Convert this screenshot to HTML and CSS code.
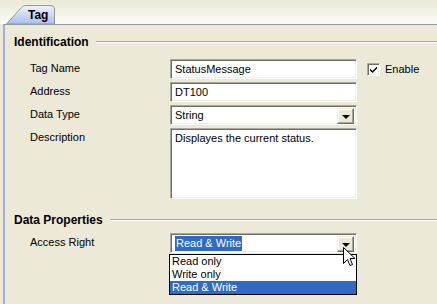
FILE: index.html
```html
<!DOCTYPE html>
<html lang="en">
<head>
  <meta charset="UTF-8" />
  <title>Tag Properties</title>
  <link rel="stylesheet" href="styles.css">
</head>
<body>

<div class="tabs">
  <div class="tab">
    <svg class="tab-shape" width="50" height="21" viewBox="0 0 50 21">
      <defs>
        <linearGradient id="tabfill" x1="0" y1="0" x2="0" y2="1">
          <stop offset="0" stop-color="#eef2fc"/>
          <stop offset="1" stop-color="#a9bfee"/>
        </linearGradient>
      </defs>
      <path d="M0.5 21 L15.5 4.5 Q17 2.5 19.5 2.5 L45 2.5 Q48.5 2.5 48.5 6 L48.5 21 Z" fill="url(#tabfill)" stroke="#919b9c" stroke-width="1"/>
    </svg>
    <span class="tab-label">Tag</span>
  </div>
</div>

<div class="pane">
  <div class="group-title">Identification</div>

  <div class="form">
    <label class="label">Tag Name</label>
    <div class="field"><div class="input">StatusMessage</div></div>
    <div class="extra">
      <span class="checkbox">
        <svg width="9" height="9" viewBox="0 0 9 9"><path d="M1 3.5 L3.5 6 L8 1.5 L8 3.5 L3.5 8 L1 5.5 Z" fill="#000"/></svg>
      </span>
      Enable
    </div>

    <label class="label">Address</label>
    <div class="field"><div class="input">DT100</div></div>
    <div class="extra"></div>

    <label class="label">Data Type</label>
    <div class="field">
      <div class="input combo">
        <span class="combo-text">String</span>
        <span class="combo-btn"><span class="arrow"></span></span>
      </div>
    </div>
    <div class="extra"></div>

    <label class="label">Description</label>
    <div class="field"><div class="input textarea">Displayes the current status.</div></div>
    <div class="extra"></div>
  </div>

  <div class="group-title second">Data Properties</div>

  <div class="form compact">
    <label class="label">Access Right</label>
    <div class="field dropdown-host">
      <div class="input combo">
        <span class="combo-text"><span class="selected">Read &amp; Write</span></span>
        <span class="combo-btn"><span class="arrow"></span></span>
      </div>
      <ul class="dropdown">
        <li>Read only</li>
        <li>Write only</li>
        <li class="active">Read &amp; Write</li>
      </ul>
      <svg class="cursor" width="13" height="21" viewBox="0 0 13 21">
        <path d="M0.5 0.5 L0.5 16.5 L4.5 12.5 L7 18.5 L9.5 17.5 L7 11.5 L12 11.5 Z" fill="#fff" stroke="#000" stroke-width="1"/>
      </svg>
    </div>
    <div class="extra"></div>
  </div>
</div>

</body>
</html>
```

FILE: styles.css
```css
:root {
  --face: #ece9d8;
  --edge: #919b9c;
  --line: #aca899;
  --select: #316ac5;
}

* {
  box-sizing: border-box;
}

body {
  margin: 0;
  height: 304px;
  background: var(--face);
  font-family: 'Liberation Sans', Arial, sans-serif;
  font-size: 11px;
  color: #000;
  overflow: hidden;
}

.tabs {
  height: 24px;
  padding-left: 6px;
  display: flex;
  align-items: flex-end;
  background: linear-gradient(#ece9d8, #fbfbf8);
}

.tab {
  position: relative;
  width: 50px;
  height: 21px;
}

.tab-shape {
  position: absolute;
  left: 0;
  top: 0;
}

.tab-label {
  position: relative;
  display: block;
  padding: 5px 0 0 22px;
  font-weight: bold;
  font-size: 12px;
}

.pane {
  margin-left: 3px;
  border-top: 1px solid var(--edge);
  border-left: 2px solid #9db2d6;
  padding: 10px 0 0 9px;
  height: 280px;
}

.group-title {
  display: flex;
  align-items: center;
  font-weight: bold;
  font-size: 12px;
  height: 14px;
}

.group-title::after {
  content: "";
  flex: 1;
  height: 1px;
  margin-left: 7px;
  background: var(--line);
  border-bottom: 1px solid #fff;
  box-sizing: content-box;
}

.group-title.second {
  margin-top: 14px;
}

.form {
  display: grid;
  grid-template-columns: 140px 187px 1fr;
  row-gap: 3px;
  padding-left: 16px;
  margin-top: 10px;
}

.form.compact {
  margin-top: 6px;
}

.label {
  padding-top: 3px;
}

.field {
  width: 187px;
}

.input {
  height: 20px;
  background: #fff;
  border: 1px solid;
  border-color: #aca899 #fff #fff #aca899;
  box-shadow: inset 1px 1px 0 #716f64, inset -1px -1px 0 #f1efe2;
  padding: 3px 4px 0;
  white-space: nowrap;
}

.textarea {
  height: 71px;
}

.combo {
  display: flex;
  align-items: flex-start;
  padding: 2px 2px 0 2px;
}

.combo-text {
  flex: 1;
  padding: 1px 0 0 2px;
}

.combo-btn {
  width: 17px;
  height: 16px;
  background: var(--face);
  border: 1px solid;
  border-color: #f1efe2 #716f64 #716f64 #f1efe2;
  box-shadow: inset -1px -1px 0 #aca899, inset 1px 1px 0 #fff;
  display: flex;
  align-items: center;
  justify-content: center;
}

.arrow {
  width: 0;
  height: 0;
  border-left: 4px solid transparent;
  border-right: 4px solid transparent;
  border-top: 4px solid #000;
  margin-top: 1px;
}

.extra {
  display: flex;
  align-items: center;
  gap: 5px;
  padding-left: 10px;
  height: 20px;
}

.checkbox {
  width: 13px;
  height: 13px;
  background: #fff;
  border: 1px solid;
  border-color: #aca899 #fff #fff #aca899;
  box-shadow: inset 1px 1px 0 #716f64, inset -1px -1px 0 #f1efe2;
  display: flex;
  align-items: center;
  justify-content: center;
}

.selected {
  background: var(--select);
  color: #fff;
  padding: 1px 1px 2px;
}

.dropdown-host {
  position: relative;
}

.dropdown {
  position: absolute;
  left: -1px;
  top: 21px;
  width: 188px;
  margin: 0;
  padding: 0;
  list-style: none;
  background: #fff;
  border: 1px solid #000;
}

.dropdown li {
  height: 13px;
  line-height: 13px;
  padding-left: 2px;
}

.dropdown li.active {
  background: var(--select);
  color: #fff;
}

.cursor {
  position: absolute;
  left: 173px;
  top: 14px;
}
```
